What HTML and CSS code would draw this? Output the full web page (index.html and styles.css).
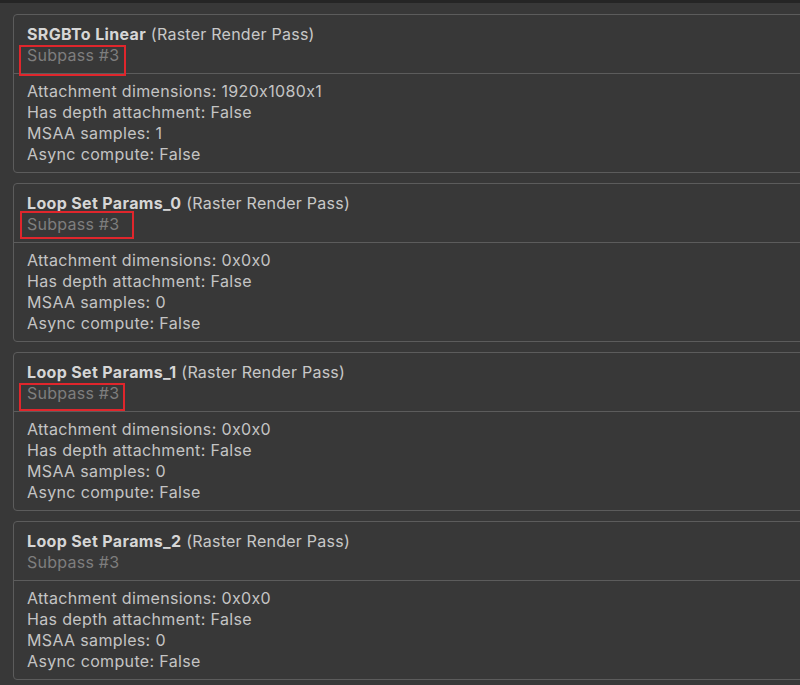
FILE: index.html
```html
<!DOCTYPE html>
<html lang="en">
<head>
    <meta charset="UTF-8">
    <title>Render Graph Passes</title>
    <link rel="stylesheet" href="styles.css">
</head>
<body>
<div class="topbar"></div>
<div class="pass-list">
    <div class="pass">
        <div class="pass-head">
            <div class="pass-title"><b>SRGBTo Linear</b> (Raster Render Pass)</div>
            <div class="pass-sub">Subpass #3</div>
        </div>
        <div class="pass-body">
            <div>Attachment dimensions: 1920x1080x1</div>
            <div>Has depth attachment: False</div>
            <div>MSAA samples: 1</div>
            <div>Async compute: False</div>
        </div>
        <div class="mark mark-a"></div>
    </div>
    <div class="pass">
        <div class="pass-head">
            <div class="pass-title"><b>Loop Set Params_0</b> (Raster Render Pass)</div>
            <div class="pass-sub">Subpass #3</div>
        </div>
        <div class="pass-body">
            <div>Attachment dimensions: 0x0x0</div>
            <div>Has depth attachment: False</div>
            <div>MSAA samples: 0</div>
            <div>Async compute: False</div>
        </div>
        <div class="mark mark-b"></div>
    </div>
    <div class="pass">
        <div class="pass-head">
            <div class="pass-title"><b>Loop Set Params_1</b> (Raster Render Pass)</div>
            <div class="pass-sub">Subpass #3</div>
        </div>
        <div class="pass-body">
            <div>Attachment dimensions: 0x0x0</div>
            <div>Has depth attachment: False</div>
            <div>MSAA samples: 0</div>
            <div>Async compute: False</div>
        </div>
        <div class="mark mark-c"></div>
    </div>
    <div class="pass">
        <div class="pass-head">
            <div class="pass-title"><b>Loop Set Params_2</b> (Raster Render Pass)</div>
            <div class="pass-sub">Subpass #3</div>
        </div>
        <div class="pass-body">
            <div>Attachment dimensions: 0x0x0</div>
            <div>Has depth attachment: False</div>
            <div>MSAA samples: 0</div>
            <div>Async compute: False</div>
        </div>
    </div>
</div>
</body>
</html>
```
FILE: styles.css
```css
body {
    margin: 0;
    height: 100vh;
    overflow: hidden;
    background-color: #383838;
    font-family: Inter, 'Noto Sans', sans-serif;
    font-size: 16px;
    line-height: 21px;
    letter-spacing: 0.25px;
    font-feature-settings: "calt" 0;
    color: #c4c4c4;
}

.topbar {
    height: 3px;
    background-color: #252525;
}

.pass-list {
    display: flex;
    flex-direction: column;
    gap: 10px;
    padding: 11px 0 0 13px;
}

.pass {
    position: relative;
    margin-right: -12px;
    border: 1px solid #5c5c5c;
    border-radius: 4px;
}

.pass-head {
    padding: 9px 13px 7px;
    border-bottom: 1px solid #5c5c5c;
}

.pass-title {
    color: #c8c8c8;
}

.pass-title b {
    color: #d6d6d6;
    font-weight: 700;
    letter-spacing: 0.35px;
}

.pass-sub {
    color: #7e7e7e;
}

.pass-body {
    padding: 7px 13px 7px;
    letter-spacing: 0.35px;
}

.mark {
    position: absolute;
    border: 2px solid #e0262c;
    box-sizing: border-box;
}

.mark-a {
    left: 5px;
    top: 30px;
    width: 107px;
    height: 31px;
}

.mark-b {
    left: 6px;
    top: 27px;
    width: 114px;
    height: 28px;
}

.mark-c {
    left: 5px;
    top: 30px;
    width: 106px;
    height: 28px;
}
```
